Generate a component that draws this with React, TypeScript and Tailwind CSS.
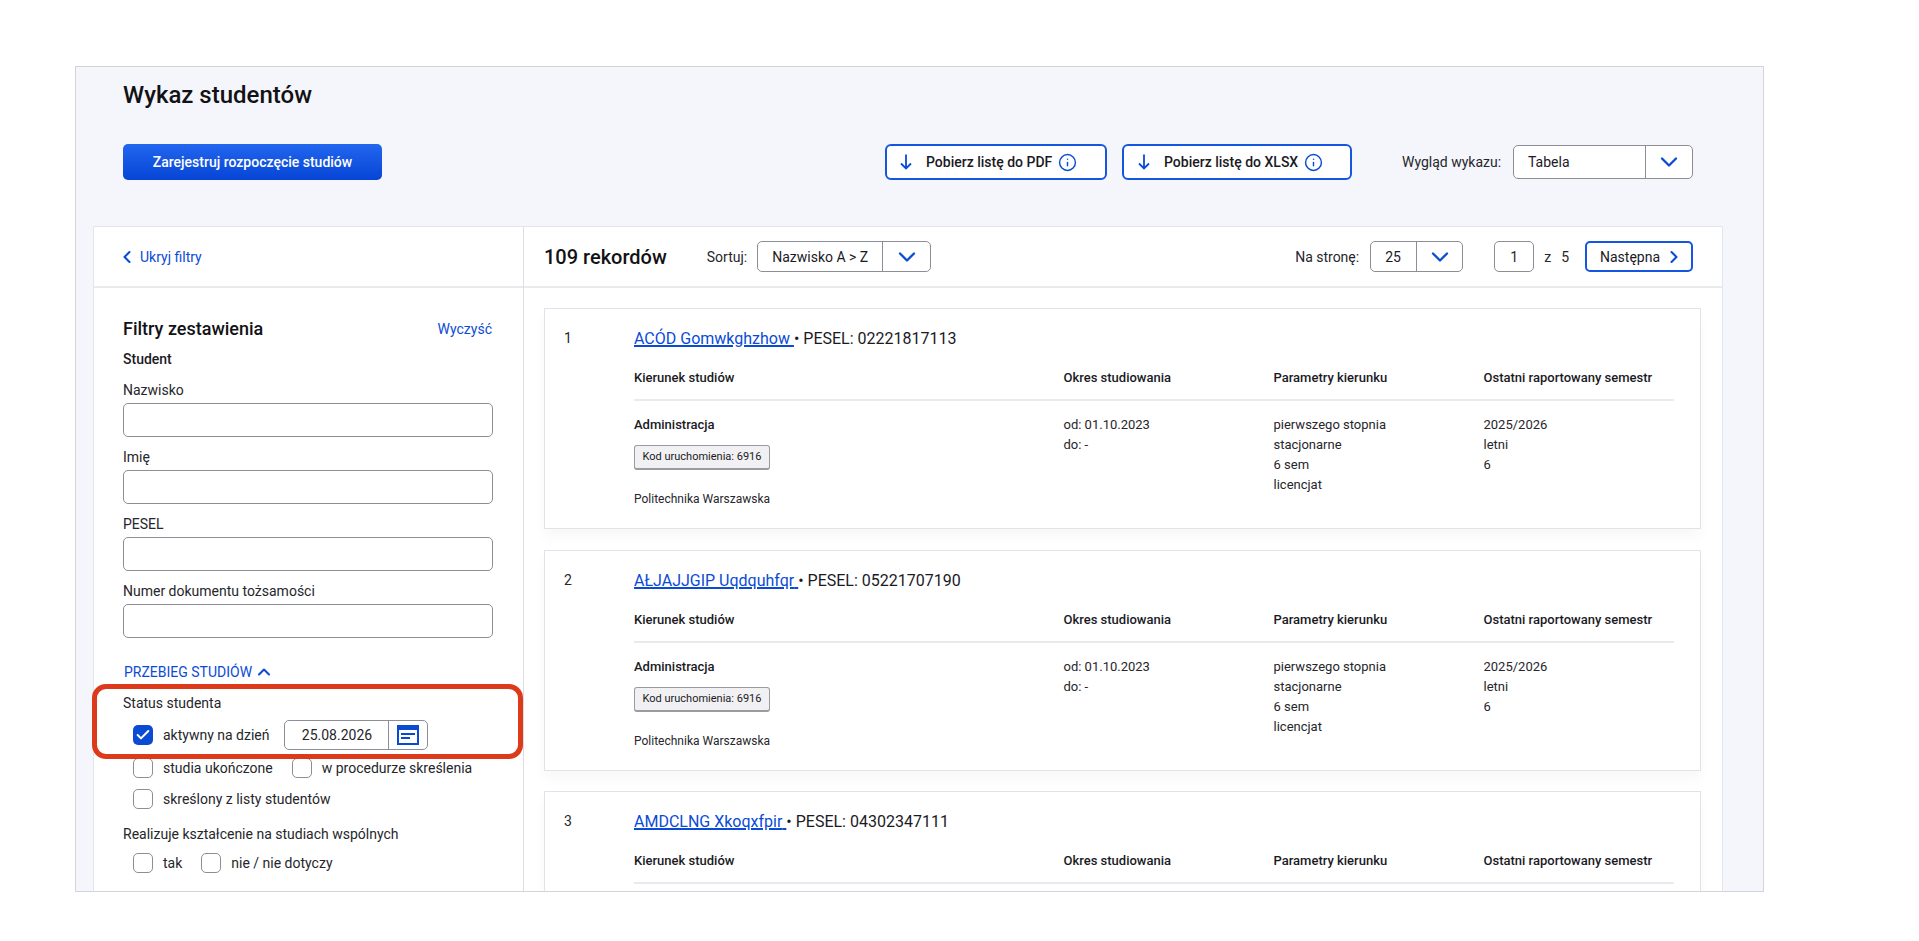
import { ChevronDown, ChevronLeft, ChevronRight, ChevronUp, Check, Info } from "lucide-react";

const students = [
  { no: 1, name: "ACÓD Gomwkghzhow", pesel: "02221817113" },
  { no: 2, name: "AŁJAJJGIP Uqdquhfqr", pesel: "05221707190" },
  { no: 3, name: "AMDCLNG Xkoqxfpir", pesel: "04302347111" },
];

const filterFields = ["Nazwisko", "Imię", "PESEL", "Numer dokumentu tożsamości"];

const Select = ({ value, width, text }: { value: string; width: string; text: string }) => (
  <div className={`flex h-full items-stretch rounded-[5px] border border-[#8d8d96] bg-white ${width}`}>
    <div className={`flex items-center whitespace-nowrap border-r border-[#8d8d96] text-sm text-[#1a1a1f] ${text}`}>{value}</div>
    <div className="flex flex-1 items-center justify-center">
      <ChevronDown className="h-7 w-7 text-[#0a4bd6]" strokeWidth={2} />
    </div>
  </div>
);

const DownArrow = () => (
  <svg width="12" height="16" viewBox="0 0 12 16" fill="none" stroke="#0a4bd6" strokeWidth="1.8" className="shrink-0">
    <path d="M6 0.5V14.5M1 9.5L6 14.5L11 9.5" />
  </svg>
);

const DownloadButton = ({ label, width }: { label: string; width: string }) => (
  <button className={`flex h-[36px] items-center rounded-[6px] border-2 border-[#1556e0] bg-white text-sm font-medium text-[#1a1a1f] ${width}`}>
    <DownArrow />
    <span className="ml-[14px] whitespace-nowrap">{label}</span>
    <Info className="ml-[6px] h-[19px] w-[19px] text-[#0a4bd6]" strokeWidth={1.8} />
  </button>
);

const Checkbox = ({ checked = false }: { checked?: boolean }) =>
  checked ? (
    <span className="flex h-5 w-5 shrink-0 items-center justify-center rounded-[5px] bg-[#0a4bd6]">
      <Check className="h-4 w-4 text-white" strokeWidth={3} />
    </span>
  ) : (
    <span className="h-5 w-5 shrink-0 rounded-[5px] border border-[#8d8d96] bg-white" />
  );

const CheckItem = ({ label, checked }: { label: string; checked?: boolean }) => (
  <label className="flex items-center gap-[10px] whitespace-nowrap text-sm text-[#26262b]">
    <Checkbox checked={checked} />
    {label}
  </label>
);

const CalendarIcon = () => (
  <svg width="22" height="20" viewBox="0 0 22 20" className="text-[#0a4bd6]">
    <rect x="1" y="1" width="20" height="18" fill="none" stroke="currentColor" strokeWidth="2" />
    <rect x="1" y="1" width="20" height="4" fill="currentColor" />
    <rect x="4" y="8" width="14" height="2" fill="currentColor" />
    <rect x="4" y="12" width="9" height="2" fill="currentColor" />
  </svg>
);

const StudentCard = ({ no, name, pesel }: { no: number; name: string; pesel: string }) => (
  <article className="flex h-[221px] shrink-0 border border-[#e1e3ea] bg-white pt-[20px] shadow-[0_8px_12px_rgba(30,40,70,0.03)]">
    <div className="w-[89px] shrink-0 pl-[19px] text-sm leading-[19px] text-[#26262b]">{no}</div>
    <div className="w-[1040px]">
      <p className="text-base leading-[19px] text-[#1a1a1f]">
        <a className="text-[#0a4bd6] underline decoration-[1.5px]">{name} </a> • PESEL: {pesel}
      </p>
      <div className="mt-[12px] grid h-[41px] grid-cols-[429.5px_210px_210px_1fr] border-b-2 border-[#e9eaee] pt-[9px] text-[13px] font-medium leading-[18px] text-[#1a1a1f]">
        <div>Kierunek studiów</div>
        <div>Okres studiowania</div>
        <div>Parametry kierunku</div>
        <div>Ostatni raportowany semestr</div>
      </div>
      {/* third card is cut by the window right under its header */}
      {no < 3 && (
        <div className="grid grid-cols-[429.5px_210px_210px_1fr] pt-[14px] text-[13px] leading-[20px] text-[#26262b]">
          <div>
            <div className="font-medium text-[#1a1a1f]">Administracja</div>
            <div className="mt-[10px] flex h-[25px] w-[136px] items-center justify-center rounded-[3px] border border-b-2 border-[#9a9aa2] bg-[#f1f1f3] text-[11px] text-[#1a1a1f]">
              Kod uruchomienia: 6916
            </div>
            <div className="mt-[19px] text-xs leading-[20px]">Politechnika Warszawska</div>
          </div>
          <div>
            <div>od: 01.10.2023</div>
            <div>do: -</div>
          </div>
          <div>
            <div>pierwszego stopnia</div>
            <div>stacjonarne</div>
            <div>6 sem</div>
            <div>licencjat</div>
          </div>
          <div>
            <div>2025/2026</div>
            <div>letni</div>
            <div>6</div>
          </div>
        </div>
      )}
    </div>
  </article>
);

const App = () => {
  return (
    <div className="h-[941px] w-[1919px] overflow-hidden bg-white pl-[75px] pt-[66px] font-['Roboto',sans-serif]">
      <div className="flex h-[826px] w-[1689px] flex-col overflow-hidden border border-[#d3d4d8] bg-[#f4f6fb]">
        <h1 className="ml-[47px] mt-[12px] text-2xl font-medium leading-[32px] text-[#121216]">Wykaz studentów</h1>

        <div className="ml-[47px] mr-[70px] mt-[33px] flex h-[36px] items-center">
          <button className="h-[36px] w-[259px] shrink-0 rounded-[5px] bg-gradient-to-b from-[#2266ee] to-[#0644d6] text-sm font-medium text-white">
            Zarejestruj rozpoczęcie studiów
          </button>
          <div className="ml-[503px]">
            <DownloadButton label="Pobierz listę do PDF" width="w-[222px] pl-[13px]" />
          </div>
          <div className="ml-[15px]">
            <DownloadButton label="Pobierz listę do XLSX" width="w-[230px] pl-[14px]" />
          </div>
          <span className="ml-[50px] w-[99px] whitespace-nowrap text-sm text-[#26262b]">Wygląd wykazu:</span>
          <div className="ml-[12px] h-[34px]">
            <Select value="Tabela" width="w-[180px]" text="w-[132px] pl-[14px]" />
          </div>
        </div>

        <div className="ml-[17px] mt-[46px] flex min-h-0 w-[1630px] flex-1 border-l border-r border-t border-[#e4e5ea] bg-white">
          <aside className="w-[430px] shrink-0 border-r border-[#dcdde2]">
            <div className="flex h-[61px] items-center border-b-2 border-[#e9eaee] pl-[23px] text-sm text-[#0a4bd6]">
              <ChevronLeft className="h-5 w-5" strokeWidth={2.5} />
              <span className="ml-[3px]">Ukryj filtry</span>
            </div>
            <div className="pl-[29px] pr-[30px] pt-[27px]">
              <div className="flex items-center justify-between">
                <h2 className="text-lg font-medium leading-[28px] text-[#121216]">Filtry zestawienia</h2>
                <a className="mr-px text-sm text-[#0a4bd6]">Wyczyść</a>
              </div>
              <div className="mt-[7px] text-sm font-medium leading-[18px] text-[#1a1a1f]">Student</div>

              <div className="mt-[12px] flex flex-col gap-[10px]">
                {filterFields.map((field) => (
                  <div key={field}>
                    <div className="text-sm leading-[20px] text-[#26262b]">{field}</div>
                    <div className="mt-[3px] h-[34px] rounded-[5px] border border-[#8d8d96] bg-white" />
                  </div>
                ))}
              </div>

              <div className="mt-[24px] flex items-center pl-px text-sm leading-[20px] text-[#0a4bd6]">
                PRZEBIEG STUDIÓW
                <ChevronUp className="ml-[2px] h-5 w-5" strokeWidth={2.5} />
              </div>

              <div className="relative mt-[5px] pb-[4px]">
                <div className="absolute -left-[31px] -top-[3px] bottom-[-5px] w-[431px] rounded-[14px] border-[5px] border-[#dc3a1a]" />
                <div className="pt-[6px] text-sm leading-[20px] text-[#26262b]">Status studenta</div>
                <div className="mt-[7px] flex h-[30px] items-center pl-[10px]">
                  <CheckItem label="aktywny na dzień" checked />
                  <div className="ml-[15px] flex h-[30px] w-[144px] items-stretch rounded-[5px] border border-[#8d8d96] bg-white">
                    <div className="flex w-[104px] items-center justify-center border-r border-[#8d8d96] text-sm text-[#26262b]">
                      25.08.2026
                    </div>
                    <div className="flex flex-1 items-center justify-center">
                      <CalendarIcon />
                    </div>
                  </div>
                </div>
              </div>

              <div className="mt-[4px] flex flex-col gap-[11px] pl-[10px]">
                <div className="flex gap-[19px]">
                  <CheckItem label="studia ukończone" />
                  <CheckItem label="w procedurze skreślenia" />
                </div>
                <CheckItem label="skreślony z listy studentów" />
              </div>

              <div className="mt-[15px] text-sm leading-[20px] text-[#26262b]">Realizuje kształcenie na studiach wspólnych</div>
              <div className="mt-[9px] flex gap-[19px] pl-[10px]">
                <CheckItem label="tak" />
                <CheckItem label="nie / nie dotyczy" />
              </div>
            </div>
          </aside>

          <main className="flex min-w-0 flex-1 flex-col">
            <div className="flex h-[61px] shrink-0 items-center border-b-2 border-[#e9eaee] pl-[20px] pr-[29px]">
              <span className="text-xl font-medium text-[#121216]">109 rekordów</span>
              <span className="ml-[40px] text-sm text-[#26262b]">Sortuj:</span>
              <div className="ml-[10px] h-[31px]">
                <Select value="Nazwisko A > Z" width="w-[174px]" text="w-[125px] pl-[14px]" />
              </div>
              <span className="ml-auto text-sm text-[#26262b]">Na stronę:</span>
              <div className="ml-[11px] h-[31px]">
                <Select value="25" width="w-[93px]" text="w-[46px] pl-[14px]" />
              </div>
              <div className="ml-[31px] flex h-[31px] w-[40px] items-center justify-center rounded-[5px] border border-[#8d8d96] text-sm text-[#26262b]">1</div>
              <span className="ml-[10px] text-sm text-[#26262b]">z</span>
              <span className="ml-[10px] text-sm text-[#26262b]">5</span>
              <button className="ml-[16px] flex h-[31px] w-[108px] items-center gap-[4px] rounded-[5px] border-2 border-[#1556e0] pl-[13px] text-sm text-[#1a1a1f]">
                Następna
                <ChevronRight className="h-5 w-5 text-[#0a4bd6]" strokeWidth={2.5} />
              </button>
            </div>
            <div className="flex flex-col gap-[20.5px] pl-[20px] pr-[21px] pt-[20px]">
              {students.map((s) => (
                <StudentCard key={s.no} {...s} />
              ))}
            </div>
          </main>
        </div>
      </div>
    </div>
  );
};

export default App;
